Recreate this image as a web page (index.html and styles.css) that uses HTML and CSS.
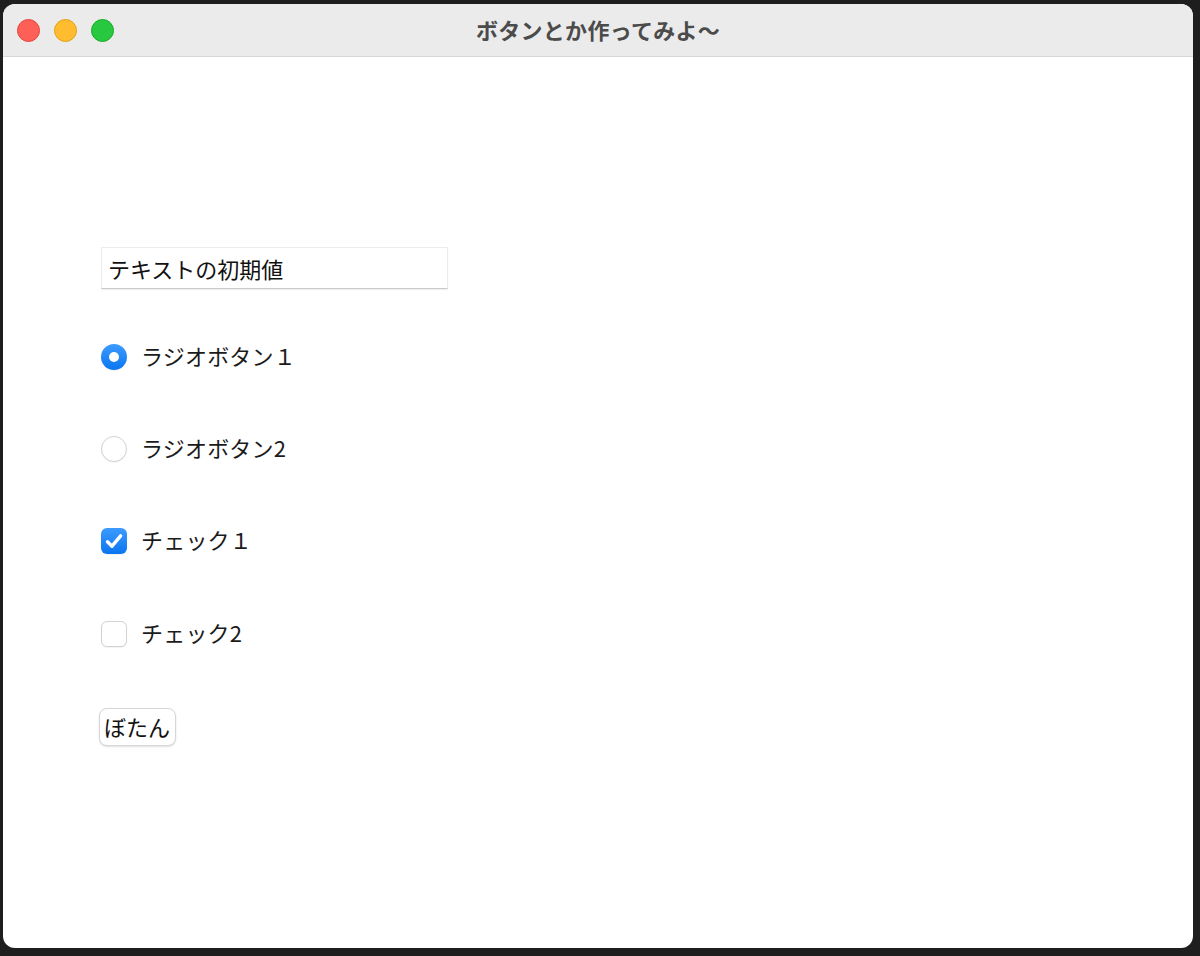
FILE: index.html
```html
<!DOCTYPE html>
<html lang="ja">
<head>
<meta charset="utf-8">
<title>ボタンとか作ってみよ〜</title>
<link rel="stylesheet" href="styles.css">
</head>
<body>
<div class="window">
  <div class="titlebar">
    <div class="lights">
      <span class="light red"></span>
      <span class="light yellow"></span>
      <span class="light green"></span>
    </div>
    <div class="title">ボタンとか作ってみよ〜</div>
  </div>
  <div class="content">
    <div class="textfield">テキストの初期値</div>
    <div class="row r1"><span class="radio on"></span><span class="label">ラジオボタン１</span></div>
    <div class="row r2"><span class="radio"></span><span class="label">ラジオボタン2</span></div>
    <div class="row r3"><span class="check on"><svg viewBox="0 0 26 26" width="26" height="26"><path d="M6.5 13.8 L11 18.2 L19.6 7.8" fill="none" stroke="#fff" stroke-width="3.4" stroke-linecap="round" stroke-linejoin="round"/></svg></span><span class="label">チェック１</span></div>
    <div class="row r4"><span class="check"></span><span class="label">チェック2</span></div>
    <div class="button">ぼたん</div>
  </div>
</div>
</body>
</html>
```
FILE: styles.css
```css
html, body {
  margin: 0;
  padding: 0;
  background: #1e1e1e;
}
body {
  width: 1200px;
  height: 956px;
  overflow: hidden;
  font-family: "Noto Sans CJK JP", "Noto Sans", sans-serif;
  color: #1b1b1b;
}
.window {
  margin: 4px 0 0 3px;
  width: 1190px;
  height: 944px;
  border-radius: 12px;
  background: #ffffff;
  overflow: hidden;
  display: flex;
  flex-direction: column;
}
.titlebar {
  height: 52px;
  flex: none;
  background: #ebebeb;
  border-bottom: 1px solid #d8d8d8;
  display: flex;
  align-items: center;
  justify-content: center;
  position: relative;
}
.lights {
  position: absolute;
  left: 14px;
  top: 15px;
  display: flex;
  gap: 14px;
}
.light {
  width: 23px;
  height: 23px;
  border-radius: 50%;
  box-sizing: border-box;
}
.red { background: #fe5f57; border: 1px solid #e2463f; }
.yellow { background: #febc2e; border: 1px solid #e1a116; }
.green { background: #28c840; border: 1px solid #1aab29; }
.title {
  font-size: 22px;
  font-weight: 700;
  color: #4b4b4b;
  letter-spacing: 0.3px;
  margin-top: -2px;
}
.content {
  flex: 1;
  padding: 190px 0 0 98px;
  display: flex;
  flex-direction: column;
  align-items: flex-start;
}
.textfield {
  box-sizing: border-box;
  width: 347px;
  height: 42px;
  border: 1px solid #ececec;
  border-bottom: 1px solid #c9c9c9;
  box-shadow: 0 1px 1px rgba(0,0,0,0.06);
  font-size: 22px;
  line-height: 40px;
  padding-left: 6px;
  color: #111;
}
.row {
  display: flex;
  align-items: center;
  height: 26px;
}
.r1 { margin-top: 55px; }
.r2 { margin-top: 66px; }
.r3 { margin-top: 66px; }
.r4 { margin-top: 67px; }
.label {
  font-size: 22px;
  margin-left: 14px;
  line-height: 26px;
  margin-top: -4px;
  letter-spacing: 0.2px;
}
.radio {
  width: 26px;
  height: 26px;
  border-radius: 50%;
  box-sizing: border-box;
  border: 1px solid #d2d2d2;
  background: #fff;
  box-shadow: 0 1px 1px rgba(0,0,0,0.05);
  display: flex;
  align-items: center;
  justify-content: center;
}
.radio.on {
  border: none;
  background: linear-gradient(#3d9bff, #0a76f0);
}
.radio.on::after {
  content: "";
  width: 10px;
  height: 10px;
  border-radius: 50%;
  background: #fff;
}
.check {
  width: 26px;
  height: 26px;
  border-radius: 6px;
  box-sizing: border-box;
  border: 1px solid #d2d2d2;
  background: #fff;
  box-shadow: 0 1px 1px rgba(0,0,0,0.05);
  display: flex;
}
.check.on {
  border: none;
  background: linear-gradient(#3d9bff, #0a76f0);
}
.button {
  margin-top: 61px;
  margin-left: -2px;
  box-sizing: border-box;
  height: 38px;
  padding: 0 5px 0 4px;
  border: 1px solid #d6d6d6;
  border-radius: 8px;
  box-shadow: 0 1px 2px rgba(0,0,0,0.12);
  background: #fff;
  font-size: 22px;
  line-height: 34px;
  color: #111;
}
```
